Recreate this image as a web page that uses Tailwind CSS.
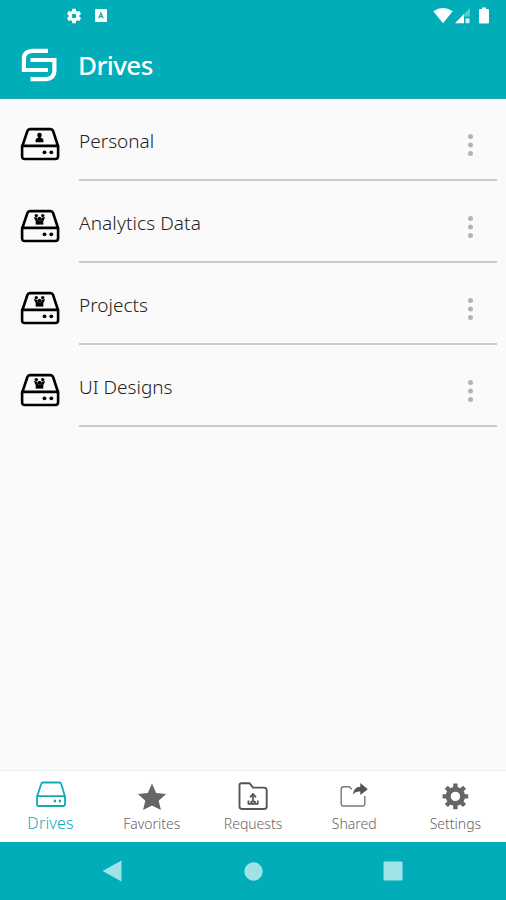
<!DOCTYPE html>
<html lang="en">
<head>
    <meta charset="UTF-8">
    <meta name="viewport" content="width=device-width, initial-scale=1">
    <title>Drives</title>
    <script src="https://cdn.jsdelivr.net/npm/@tailwindcss/browser@4"></script>
</head>
<body class="w-full h-screen flex flex-col overflow-hidden bg-[#fafafa] font-['Noto_Sans','Open_Sans',sans-serif]">
<svg class="hidden">
    <symbol id="drive" viewBox="0 0 40 34">
        <g fill="none" stroke="currentColor" stroke-width="2.6" stroke-linejoin="round">
            <path d="M2.4 19 L7.4 4 Q8.1 2.1 10 2.1 H30.5 Q32.4 2.1 33.1 4 L38 19"/>
            <path d="M2.1 18.9 H38.1 V29.3 Q38.1 32 35.4 32 H4.8 Q2.1 32 2.1 29.3 Z"/>
        </g>
        <circle cx="24.5" cy="25.3" r="1.9" fill="currentColor"/>
        <circle cx="31.3" cy="25.3" r="1.9" fill="currentColor"/>
    </symbol>
    <symbol id="person" viewBox="0 0 40 34">
        <path d="M15.6 15.2 V12.8 Q15.6 11.2 18.3 10.7 Q17.2 9.4 17.2 8 Q17.2 5.8 19.5 5.8 Q21.8 5.8 21.8 8 Q21.8 9.4 20.7 10.7 Q23.4 11.2 23.4 12.8 V15.2 Z" fill="currentColor"/>
    </symbol>
    <symbol id="group" viewBox="0 0 40 34">
        <g fill="currentColor">
            <circle cx="16.3" cy="6.6" r="1.7"/>
            <circle cx="22.7" cy="6.6" r="1.7"/>
            <path d="M14 8 L17.4 8.8 L18 12 L15.2 11.4 Z M25 8 L21.6 8.8 L21 12 L23.8 11.4 Z"/>
            <circle cx="19.5" cy="9.7" r="1.9"/>
            <path d="M15.7 11.3 H23.3 V15.6 H15.7 Z"/>
        </g>
    </symbol>
    <symbol id="more" viewBox="0 0 8 24">
        <g fill="currentColor"><circle cx="4.5" cy="3.4" r="2.5"/><circle cx="4.5" cy="12" r="2.5"/><circle cx="4.5" cy="20.5" r="2.5"/></g>
    </symbol>
</svg>

<!-- status bar + title -->
<header class="h-[99px] flex-none bg-[#00adb8] border-b border-[#2aa9b2] text-white">
    <div class="h-[31px] flex items-center pl-[65px] pr-4">
        <svg class="w-[18px] h-[18px]" viewBox="0 0 24 24" fill="currentColor"><path d="M19.14 12.94c.04-.3.06-.61.06-.94s-.02-.64-.07-.94l2.03-1.58c.18-.14.23-.41.12-.61l-1.92-3.32c-.12-.22-.37-.29-.59-.22l-2.39.96c-.5-.38-1.03-.7-1.62-.94l-.36-2.54c-.04-.24-.24-.41-.48-.41h-3.84c-.24 0-.43.17-.47.41l-.36 2.54c-.59.24-1.13.57-1.62.94l-2.39-.96c-.22-.08-.47 0-.59.22L2.74 8.87c-.12.21-.08.47.12.61l2.03 1.58c-.05.3-.09.63-.09.94s.02.64.07.94l-2.03 1.58c-.18.14-.23.41-.12.61l1.92 3.32c.12.22.37.29.59.22l2.39-.96c.5.38 1.03.7 1.62.94l.36 2.54c.05.24.24.41.48.41h3.84c.24 0 .44-.17.47-.41l.36-2.54c.59-.24 1.13-.56 1.62-.94l2.39.96c.22.08.47 0 .59-.22l1.92-3.32c.12-.22.07-.47-.12-.61l-2.01-1.58zM12 15.1a3.1 3.1 0 1 1 0-6.2 3.1 3.1 0 0 1 0 6.2z"/></svg>
        <svg class="w-3 h-[13px] ml-3" viewBox="0 0 12 13"><rect width="12" height="13" rx="1" fill="#fff"/><path d="M3.8 9.3 L5.9 4 L8.2 9.3 M4.8 7.6 H7.2" fill="none" stroke="#00adb8" stroke-width="1.2"/></svg>
        <svg class="w-5 h-4 ml-auto" viewBox="0 0 20 16" fill="currentColor"><path d="M0.3 3.2 Q10 -3 19.7 3.2 L10 15.2 Z"/></svg>
        <svg class="w-4 h-4 ml-0.5" viewBox="0 0 16 16" fill="currentColor"><path d="M0 15.2 L9 6 V15.2 Z"/><path d="M9 6 L15 0 V8.5 H9 Z" opacity=".35"/><path d="M10.5 10.4 h4 v4.8 h-4 Z" opacity=".85"/></svg>
        <svg class="w-3 h-[17px] ml-[7px]" viewBox="0 0 12 17" fill="currentColor"><path d="M4 0.5 H8 V2 H10 Q11 2 11 3 V15.5 Q11 16.5 10 16.5 H2 Q1 16.5 1 15.5 V3 Q1 2 2 2 H4 Z"/></svg>
    </div>
    <div class="h-[67px] flex items-center pl-[21px]">
        <svg class="w-9 h-[34px]" viewBox="0 0 36 34" fill="none" stroke="currentColor" stroke-width="4.2"><path d="M27 2.8 H11 Q2.9 3.4 2.9 10.6 V22 H27"/><path d="M9.5 12 H33.4 V23.2 Q33 30.6 25.4 31.2 H9.5"/></svg>
        <h1 class="ml-[21px] text-[26px] leading-8 font-medium tracking-[-0.6px]">Drives</h1>
    </div>
</header>

<main class="flex-1 pr-[9px]">
    <div class="h-[82px] flex pl-5">
        <div class="relative w-10 h-[34px] mt-7 text-black">
            <svg class="w-10 h-[34px]"><use href="#drive"/></svg>
            <svg class="absolute inset-0 w-10 h-[34px]"><use href="#person"/></svg>
        </div>
        <div class="flex-1 ml-[19px] flex justify-between border-b-2 border-[#cbcbcb] pr-[23px]">
            <span class="pt-7 text-[19px] leading-7 font-light text-[#222]">Personal</span>
            <svg class="w-2 h-6 mt-[34px] text-[#b4b4b4]"><use href="#more"/></svg>
        </div>
    </div>
    <div class="h-[82px] flex pl-5">
        <div class="relative w-10 h-[34px] mt-7 text-black">
            <svg class="w-10 h-[34px]"><use href="#drive"/></svg>
            <svg class="absolute inset-0 w-10 h-[34px]"><use href="#group"/></svg>
        </div>
        <div class="flex-1 ml-[19px] flex justify-between border-b-2 border-[#cbcbcb] pr-[23px]">
            <span class="pt-7 text-[19px] leading-7 font-light tracking-[0.1px] text-[#222]">Analytics Data</span>
            <svg class="w-2 h-6 mt-[34px] text-[#b4b4b4]"><use href="#more"/></svg>
        </div>
    </div>
    <div class="h-[82px] flex pl-5">
        <div class="relative w-10 h-[34px] mt-7 text-black">
            <svg class="w-10 h-[34px]"><use href="#drive"/></svg>
            <svg class="absolute inset-0 w-10 h-[34px]"><use href="#group"/></svg>
        </div>
        <div class="flex-1 ml-[19px] flex justify-between border-b-2 border-[#cbcbcb] pr-[23px]">
            <span class="pt-7 text-[19px] leading-7 font-light text-[#222]">Projects</span>
            <svg class="w-2 h-6 mt-[34px] text-[#b4b4b4]"><use href="#more"/></svg>
        </div>
    </div>
    <div class="h-[82px] flex pl-5">
        <div class="relative w-10 h-[34px] mt-7 text-black">
            <svg class="w-10 h-[34px]"><use href="#drive"/></svg>
            <svg class="absolute inset-0 w-10 h-[34px]"><use href="#group"/></svg>
        </div>
        <div class="flex-1 ml-[19px] flex justify-between border-b-2 border-[#cbcbcb] pr-[23px]">
            <span class="pt-7 text-[19px] leading-7 font-light text-[#222]">UI Designs</span>
            <svg class="w-2 h-6 mt-[34px] text-[#b4b4b4]"><use href="#more"/></svg>
        </div>
    </div>
</main>

<!-- tabs -->
<nav class="h-[72px] flex-none grid grid-cols-5 bg-white border-t border-[#ececec] text-sm leading-5 font-light text-[#666]">
    <a class="flex flex-col items-center pt-[10px] text-[#12a9b5]">
        <svg class="w-[30px] h-7" viewBox="0 0 30 28" fill="none" stroke="currentColor" stroke-width="1.8" stroke-linejoin="round"><path d="M1.2 15.2 L5.2 3 Q5.6 1.5 7 1.5 H23.4 Q24.8 1.5 25.2 3 L28.9 15.2"/><path d="M1 15.2 H29 V23.5 Q29 25 27.5 25 H2.5 Q1 25 1 23.5 Z"/><path d="M17.8 20 h2.2 M22.8 20 h2.2" stroke-width="2.4"/></svg>
        <span class="mt-1 text-base leading-5 tracking-[0.2px]">Drives</span>
    </a>
    <a class="flex flex-col items-center pt-[11px]">
        <svg class="w-[30px] h-7" viewBox="0 0 30 28" fill="#666"><path d="M15 1.5 L19.2 10.9 L29.2 12 L21.7 18.8 L23.9 28 L15 23.5 L6.1 28 L8.3 18.8 L0.8 12 L10.8 10.9 Z"/></svg>
        <span class="mt-1">Favorites</span>
    </a>
    <a class="flex flex-col items-center pt-[11px]">
        <svg class="w-[30px] h-7" viewBox="0 0 30 28" fill="none" stroke="#555" stroke-width="1.9" stroke-linejoin="round"><path d="M3.5 1.2 H11.5 L15 5.6 H26 Q28.7 5.6 28.7 8.3 V24.4 Q28.7 27 26 27 H4.2 Q1.5 27 1.5 24.4 V3.2 Q1.5 1.2 3.5 1.2 Z"/><path d="M15 19 V13 M12 15.4 L15 11.8 L18 15.4 M10.4 18.5 V21.8 H19.8 V18.5 M13.2 21.8 V19.6 H17 V21.8" stroke-width="1.7"/></svg>
        <span class="mt-1">Requests</span>
    </a>
    <a class="flex flex-col items-center pt-[11px]">
        <svg class="w-[30px] h-7" viewBox="0 0 30 28" fill="none" stroke="#777" stroke-width="1.4"><path d="M12.8 7.2 L10.4 4.7 H4.5 Q2.2 4.7 2.2 7 V21.7 Q2.2 24 4.5 24 H23.5 Q25.8 24 25.8 21.7 V14"/><path d="M13.8 12.8 Q14.5 5 21.3 4.7 V1 L28.8 7.2 L21.3 13 V9.6 Q16.6 9.2 13.8 12.8 Z" fill="#555" stroke="none"/></svg>
        <span class="mt-1">Shared</span>
    </a>
    <a class="flex flex-col items-center pt-[11px]">
        <svg class="w-[30px] h-7" viewBox="0 0 30 28"><circle cx="15.4" cy="14.4" r="7.2" fill="none" stroke="#666" stroke-width="5"/><path d="M15.4 1.6 V6 M15.4 22.8 V27.2 M2.6 14.4 H7 M23.8 14.4 H28.2 M6.3 5.3 L9.1 8.1 M21.7 20.7 L24.5 23.5 M24.5 5.3 L21.7 8.1 M9.1 20.7 L6.3 23.5" stroke="#666" stroke-width="4.4"/></svg>
        <span class="mt-1">Settings</span>
    </a>
</nav>

<!-- system navigation -->
<footer class="h-[58px] flex-none flex items-center pl-[102px] bg-[#00adb8] text-[#9ee3e6]">
    <svg class="w-5 h-[22px]" viewBox="0 0 20 22" fill="currentColor"><path d="M0.5 11 L19.5 0.5 V21.5 Z"/></svg>
    <svg class="w-[19px] h-[19px] ml-[122px]" viewBox="0 0 19 19" fill="currentColor"><circle cx="9.5" cy="9.5" r="9.2"/></svg>
    <svg class="w-5 h-5 ml-[120px]" viewBox="0 0 20 20" fill="currentColor"><rect x=".5" y=".5" width="19" height="19" rx="1"/></svg>
</footer>
</body>
</html>
